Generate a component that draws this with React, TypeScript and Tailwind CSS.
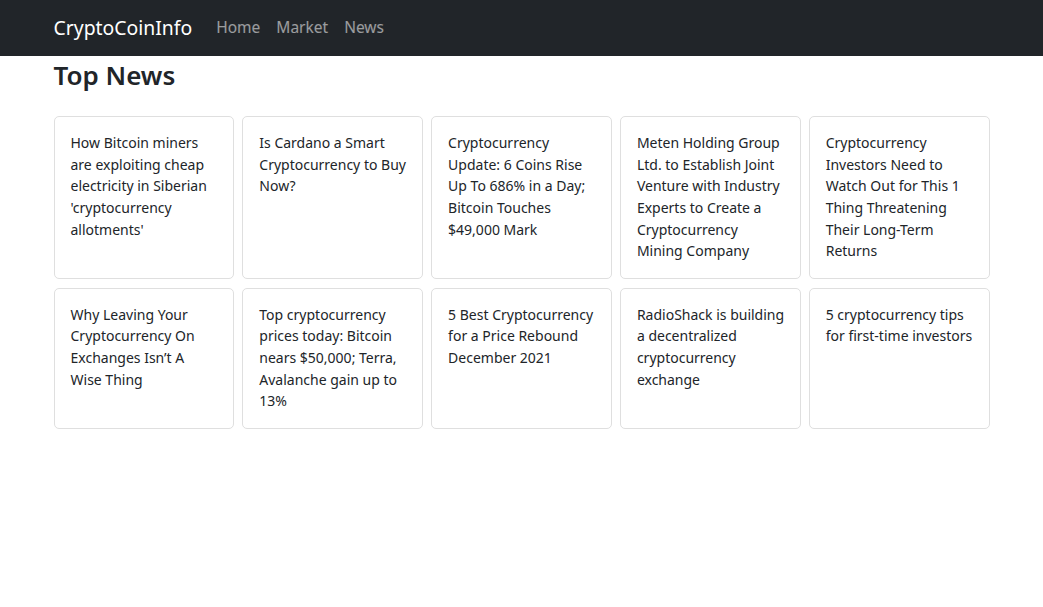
const news: string[][] = [
  ['How Bitcoin miners', 'are exploiting cheap', 'electricity in Siberian', "'cryptocurrency", "allotments'"],
  ['Is Cardano a Smart', 'Cryptocurrency to Buy', 'Now?'],
  ['Cryptocurrency', 'Update: 6 Coins Rise', 'Up To 686% in a Day;', 'Bitcoin Touches', '$49,000 Mark'],
  ['Meten Holding Group', 'Ltd. to Establish Joint', 'Venture with Industry', 'Experts to Create a', 'Cryptocurrency', 'Mining Company'],
  ['Cryptocurrency', 'Investors Need to', 'Watch Out for This 1', 'Thing Threatening', 'Their Long-Term', 'Returns'],
  ['Why Leaving Your', 'Cryptocurrency On', 'Exchanges Isn\u2019t A', 'Wise Thing'],
  ['Top cryptocurrency', 'prices today: Bitcoin', 'nears $50,000; Terra,', 'Avalanche gain up to', '13%'],
  ['5 Best Cryptocurrency', 'for a Price Rebound', 'December 2021'],
  ['RadioShack is building', 'a decentralized', 'cryptocurrency', 'exchange'],
  ['5 cryptocurrency tips', 'for first-time investors'],
]

export default function App() {
  return (
    <div className="min-h-[607px] bg-white text-[#212529] font-['Noto_Sans',sans-serif]">
      <nav className="h-14 bg-[#212529]">
        <div className="mx-auto flex h-full w-[960px] items-center px-3">
          <span className="mr-4 text-[19.4px] text-white">CryptoCoinInfo</span>
          <div className="flex text-[15.5px] text-white/55">
            <span className="px-2">Home</span>
            <span className="px-2">Market</span>
            <span className="px-2">News</span>
          </div>
        </div>
      </nav>
      <main className="mx-auto w-[960px] px-3">
        <h2 className="text-[26px] font-semibold leading-[1.2] pt-[4px] pb-[25px]">Top News</h2>
        <div className="grid grid-cols-5 gap-x-2 gap-y-[9px]">
          {news.map((lines, i) => (
            <div key={i} className="rounded-[5px] border border-[#dfdfdf] px-4 pt-[15px] pb-4">
              <p className="text-[14px] leading-[21.6px] whitespace-nowrap">
                {lines.map((l, j) => (
                  <span key={j} className="block">{l}</span>
                ))}
              </p>
            </div>
          ))}
        </div>
      </main>
    </div>
  )
}
